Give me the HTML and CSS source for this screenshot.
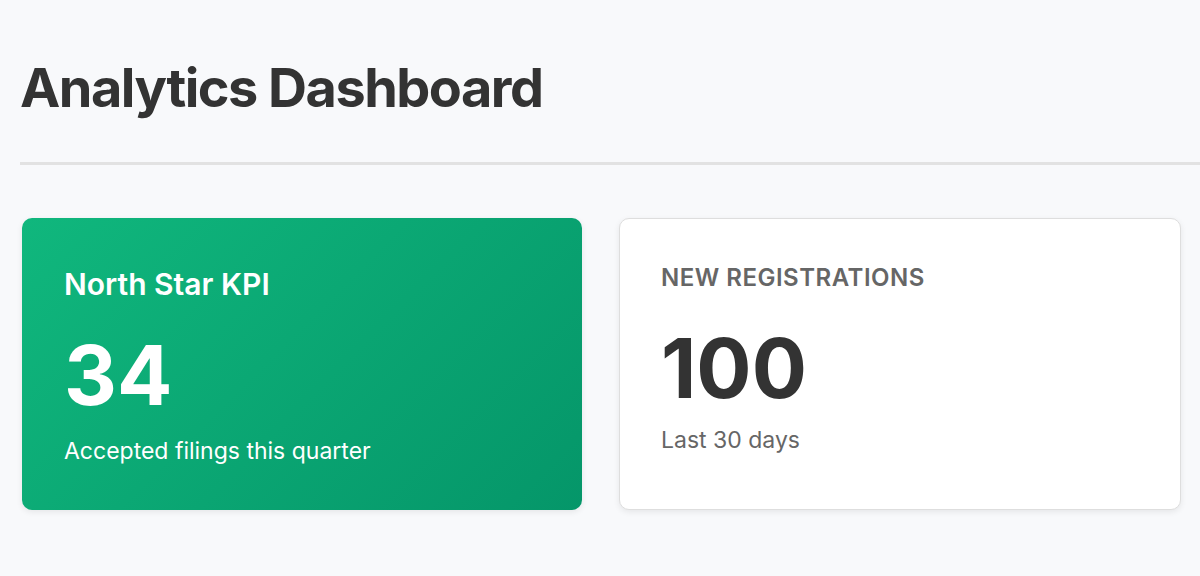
FILE: index.html
```html
<!DOCTYPE html>
<html lang="en">
<head>
<meta charset="utf-8">
<title>Analytics Dashboard</title>
<link rel="stylesheet" href="styles.css">
</head>
<body>
  <header class="page-header">
    <h1 class="page-title">Analytics Dashboard</h1>
  </header>
  <main class="cards">
    <section class="card card--primary">
      <h2 class="card-title">North Star KPI</h2>
      <div class="card-value">34</div>
      <p class="card-caption">Accepted filings this quarter</p>
    </section>
    <section class="card card--plain">
      <h2 class="card-label">New Registrations</h2>
      <div class="card-value card-value--dark">100</div>
      <p class="card-caption card-caption--muted">Last 30 days</p>
    </section>
  </main>
</body>
</html>
```
FILE: styles.css
```css
* { box-sizing: border-box; }
html, body { margin: 0; padding: 0; }
body {
  background: #f8f9fb;
  font-family: Inter, "Noto Sans", "Liberation Sans", sans-serif;
  color: #333;
  width: 1200px;
  height: 576px;
  overflow: hidden;
}
.page-header {
  margin-left: 20px;
  padding-top: 54px;
  padding-bottom: 40px;
  border-bottom: 3px solid #e2e2e2;
}
.page-title {
  margin: 0;
  font-size: 54px;
  line-height: 68px;
  font-weight: 700;
  letter-spacing: -1.5px;
  color: #333;
}
.cards {
  display: grid;
  grid-template-columns: 560px 562px;
  gap: 37px;
  padding: 53px 19px 0 22px;
}
.card {
  height: 292px;
  border-radius: 10px;
  box-shadow: 0 2px 6px rgba(0,0,0,0.08);
}
.card--primary {
  padding: 44px 42px;
  background: linear-gradient(135deg, #10b77d 0%, #059669 100%);
  color: #fff;
}
.card--plain {
  padding: 41px 41px;
  background: #fff;
  border: 1.5px solid #dedede;
}
.card-title {
  margin: 0;
  font-size: 30px;
  line-height: 44px;
  font-weight: 600;
}
.card-label {
  margin: 0;
  font-size: 24px;
  line-height: 36px;
  font-weight: 600;
  text-transform: uppercase;
  letter-spacing: 0.5px;
  color: #666;
}
.card-value {
  margin-top: 20px;
  font-size: 82px;
  line-height: 100px;
  font-weight: 700;
}
.card-value--dark { margin-top: 23px; color: #333; }
.card-caption {
  margin: 9px 0 0;
  font-size: 23px;
  line-height: 32px;
  font-weight: 400;
}
.card-caption--muted { margin-top: 5px; color: #666; }
```
